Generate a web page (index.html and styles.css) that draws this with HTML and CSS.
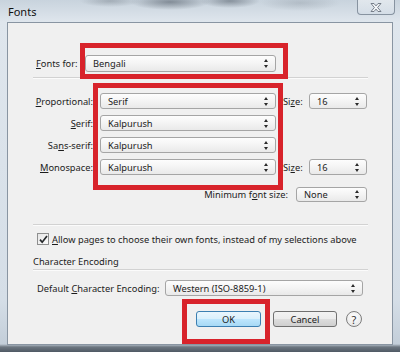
FILE: index.html
```html
<!DOCTYPE html>
<html lang="en">
<head>
    <meta charset="UTF-8">
    <title>Fonts</title>
    <link rel="stylesheet" href="styles.css">
</head>
<body>
    <div class="window">
        <!-- Title bar -->
        <div class="titlebar">
            <span class="title">Fonts</span>
            <div class="close">
                <svg width="14" height="11" viewBox="0 0 14 11">
                    <path d="M2 1.5h3l2 2.4 2-2.4h3l-3.4 4 3.4 4h-3l-2-2.4-2 2.4h-3l3.4-4z" fill="#f4f6f8" stroke="#6b7480" stroke-width="0.9" stroke-linejoin="round"/>
                </svg>
            </div>
        </div>

        <!-- Dialog body -->
        <div class="client">
            <div class="row fonts-for">
                <label class="lbl"><u>F</u>onts for:</label>
                <div class="select w-lang"><span>Bengali</span><i class="arrows"></i></div>
            </div>

            <div class="sep"></div>

            <div class="font-grid">
                <label class="lbl right"><u>P</u>roportional:</label>
                <div class="select"><span>Serif</span><i class="arrows"></i></div>
                <label class="lbl">Si<u>z</u>e:</label>
                <div class="select"><span>16</span><i class="arrows"></i></div>

                <label class="lbl right"><u>S</u>erif:</label>
                <div class="select"><span>Kalpurush</span><i class="arrows"></i></div>
                <span></span><span></span>

                <label class="lbl right">Sa<u>n</u>s-serif:</label>
                <div class="select"><span>Kalpurush</span><i class="arrows"></i></div>
                <span></span><span></span>

                <label class="lbl right"><u>M</u>onospace:</label>
                <div class="select"><span>Kalpurush</span><i class="arrows"></i></div>
                <label class="lbl">Si<u>z</u>e:</label>
                <div class="select"><span>16</span><i class="arrows"></i></div>
            </div>

            <div class="row min-size">
                <label class="lbl">Minimum f<u>o</u>nt size:</label>
                <div class="select w-min"><span>None</span><i class="arrows"></i></div>
            </div>

            <div class="sep sep-check"></div>

            <div class="row check-row">
                <span class="checkbox">
                    <svg width="9" height="9" viewBox="0 0 9 9"><path d="M1 4.6l2.2 2.6L8 1" fill="none" stroke="#26292c" stroke-width="1.7"/></svg>
                </span>
                <label class="lbl"><u>A</u>llow pages to choose their own fonts, instead of my selections above</label>
            </div>

            <div class="group-title">Character Encoding</div>
            <div class="sep sep-group"></div>

            <div class="row encoding">
                <label class="lbl">Default <u>C</u>haracter Encoding:</label>
                <div class="select w-enc"><span>Western (ISO-8859-1)</span><i class="arrows"></i></div>
            </div>

            <div class="buttons">
                <button class="btn btn-default">OK</button>
                <button class="btn btn-cancel">Cancel</button>
                <span class="help">?</span>
            </div>
        </div>

        <!-- Red annotation boxes drawn over the dialog -->
        <div class="mark mark-lang"></div>
        <div class="mark mark-fonts"></div>
        <div class="mark mark-ok"></div>
    </div>
</body>
</html>
```

FILE: styles.css
```css
* {
    margin: 0;
    padding: 0;
    box-sizing: border-box;
}

body {
    width: 400px;
    height: 352px;
    overflow: hidden;
    font-family: 'Noto Sans', 'Open Sans', sans-serif;
    font-size: 9.3px;
    color: #1c1c1c;
    background: #5f6a75;
}

/* Window frame (aero glass) */
.window {
    position: relative;
    width: 400px;
    height: 352px;
    padding: 0 7px 7px;
    display: flex;
    flex-direction: column;
    background:
        radial-gradient(ellipse 40px 8px at 170px 2px, rgba(70, 80, 92, 0.55), transparent),
        radial-gradient(ellipse 30px 7px at 230px 1px, rgba(70, 80, 92, 0.5), transparent),
        radial-gradient(ellipse 30px 6px at 110px 1px, rgba(90, 100, 110, 0.35), transparent),
        radial-gradient(ellipse 40px 8px at 300px 3px, rgba(120, 130, 140, 0.3), transparent),
        linear-gradient(to bottom, #c8d3dd 0, #dfe6ed 22px, #d5dee7 300px, #c3ced9 344px, #6d7781 347px, #4f5964 352px);
}

.titlebar {
    height: 22px;
    display: flex;
    align-items: flex-start;
}

.title {
    margin-top: 4px;
    margin-left: 1px;
    font-size: 11px;
    color: #111;
}

.close {
    margin-left: auto;
    margin-right: -2px;
    width: 38px;
    height: 15px;
    border: 1px solid #8793a0;
    border-top: none;
    border-radius: 0 0 4px 4px;
    background: linear-gradient(to bottom, rgba(255, 255, 255, 0.45), rgba(210, 220, 230, 0.6));
    display: flex;
    align-items: center;
    justify-content: center;
}

/* Client area */
.client {
    flex: 1;
    background: #f0f0f0;
    border: 1px solid #8995a2;
    padding: 0 24px 0 25px;
}

.row {
    display: flex;
    align-items: center;
}

.lbl {
    white-space: nowrap;
    line-height: 13px;
}

.lbl u {
    text-decoration-thickness: 1px;
    text-underline-offset: 1px;
}

.right {
    text-align: right;
}

/* Combo boxes */
.select {
    height: 16px;
    display: flex;
    align-items: center;
    justify-content: space-between;
    padding: 0 7px;
    border: 1px solid #a5a5a5;
    border-radius: 3px;
    background: linear-gradient(to bottom, #fdfdfd 0%, #f4f4f4 50%, #e9e9e9 100%);
    white-space: nowrap;
}

.arrows {
    position: relative;
    width: 5px;
    height: 9px;
    margin-right: -1px;
}

.arrows::before,
.arrows::after {
    content: '';
    position: absolute;
    left: 0;
    border-left: 2.5px solid transparent;
    border-right: 2.5px solid transparent;
}

.arrows::before {
    top: 0;
    border-bottom: 3px solid #2a2a2a;
}

.arrows::after {
    bottom: 0;
    border-top: 3px solid #2a2a2a;
}

.sep {
    height: 0;
    border-top: 1px solid #d2d2d2;
    border-bottom: 1px solid #fbfbfb;
}

/* Fonts for */
.fonts-for {
    margin-top: 32px;
    padding-left: 3px;
}

.fonts-for .lbl {
    width: 49px;
}

.w-lang {
    width: 191px;
    height: 17px;
}

.fonts-for + .sep {
    margin-top: 5px;
}

/* Font family grid */
.font-grid {
    margin-top: 14px;
    display: grid;
    grid-template-columns: 60px 176px 19px 58px;
    grid-auto-rows: 16px;
    column-gap: 7px;
    row-gap: 6px;
    align-items: center;
}

.min-size {
    justify-content: flex-end;
    gap: 8px;
    margin-top: 12px;
    padding-right: 1px;
}

.w-min {
    width: 71px;
    height: 15px;
}

.sep-check {
    margin-top: 22px;
}

/* Checkbox row */
.check-row {
    margin-top: 7px;
    padding-left: 4px;
    gap: 3px;
    height: 12px;
}

.checkbox {
    width: 12px;
    height: 12px;
    border: 1px solid #8e8f8f;
    background: linear-gradient(135deg, #e6e6e6, #fbfbfb);
    display: flex;
    align-items: center;
    justify-content: center;
}

.group-title {
    margin-top: 10px;
    line-height: 13px;
}

.sep-group {
    margin-top: 1px;
}

/* Encoding */
.encoding {
    margin-top: 9px;
    padding-left: 4px;
}

.encoding .lbl {
    width: 128px;
}

.w-enc {
    width: 198px;
}

/* Buttons */
.buttons {
    margin-top: 15px;
    display: flex;
    align-items: center;
    justify-content: flex-end;
    padding-right: 6px;
}

.btn {
    height: 16px;
    font-family: inherit;
    font-size: 9.3px;
    color: #1c1c1c;
    border-radius: 3px;
}

.btn-default {
    width: 65px;
    border: 1px solid #3c7fb1;
    background: linear-gradient(to bottom, #eaf6fd 0%, #d9f0fc 50%, #bee6fd 51%, #a7d9f5 100%);
}

.btn-cancel {
    width: 64px;
    margin-left: 12px;
    border: 1px solid #707070;
    background: linear-gradient(to bottom, #f2f2f2 0%, #ebebeb 50%, #dddddd 51%, #cfcfcf 100%);
}

.help {
    margin-left: 9px;
    width: 16px;
    height: 16px;
    border-radius: 50%;
    border: 1px solid #7d7d7d;
    background: radial-gradient(circle at 50% 35%, #ffffff, #e2e2e2);
    display: flex;
    align-items: center;
    justify-content: center;
    font-size: 11px;
    color: #333;
}

/* Red annotation boxes */
.mark {
    position: absolute;
    border: 5px solid #d8232b;
}

.mark-lang {
    left: 80px;
    top: 43px;
    width: 208px;
    height: 36px;
}

.mark-fonts {
    left: 93px;
    top: 83px;
    width: 190px;
    height: 107px;
}

.mark-ok {
    left: 182px;
    top: 299px;
    width: 88px;
    height: 45px;
}
```
